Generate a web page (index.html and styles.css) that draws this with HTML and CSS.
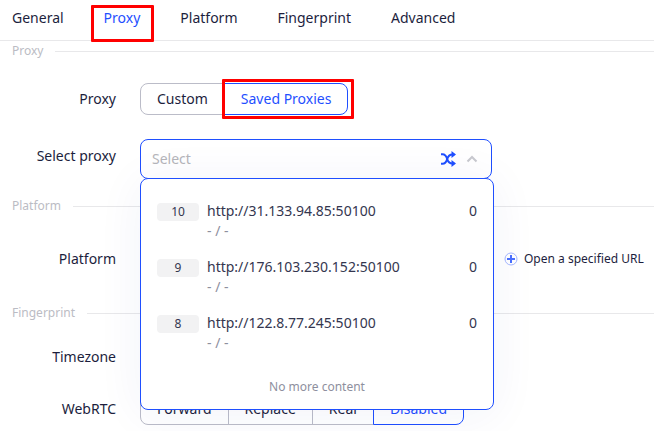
FILE: index.html
```html
<!DOCTYPE html>
<html lang="en">
<head>
  <meta charset="UTF-8">
  <meta name="viewport" content="width=device-width, initial-scale=1.0">
  <title>Proxy</title>
  <link rel="stylesheet" href="styles.css">
</head>
<body>
  <nav class="tabs">
    <a href="#general">General</a>
    <a href="#proxy" class="active marked">Proxy</a>
    <a href="#platform">Platform</a>
    <a href="#fingerprint">Fingerprint</a>
    <a href="#advanced">Advanced</a>
  </nav>

  <form>
    <section class="group" id="proxy">
      <h2 class="divider">Proxy</h2>
      <div class="rows">
        <div class="row">
          <span class="label" id="proxy-label">Proxy</span>
          <div class="segmented" role="group" aria-labelledby="proxy-label">
            <button type="button">Custom</button>
            <button type="button" class="active marked">Saved Proxies</button>
          </div>
        </div>
        <div class="row row-top">
          <label class="label" for="select-proxy">Select proxy</label>
          <div class="select">
            <div class="select-box">
              <input type="text" id="select-proxy" placeholder="Select" role="combobox" aria-expanded="true" aria-controls="proxy-menu" autocomplete="off">
              <button type="button" class="icon-button" aria-label="Random proxy">
                <svg width="16" height="16" viewBox="0 0 16 16" fill="none" stroke="#1f4fff" stroke-width="2">
                  <path d="M1 3.2h1.5c2.500 0 3.700 1.400 4.700 4.800s2.300 4.500 5.300 4.500"/>
                  <path d="M1 12.800h1.500c2.500 0 3.700-1.400 4.700-4.800s2.300-4.500 5.300-4.500"/>
                  <path d="M11.500 0l4.500 3.500-4.500 3.500zM11.500 9l4.500 3.500-4.500 3.500z" fill="#1f4fff" stroke="none"/>
                </svg>
              </button>
              <button type="button" class="icon-button" aria-label="Close list">
                <svg width="12" height="12" viewBox="0 0 12 12" fill="none" stroke="#c8c9ce" stroke-width="2">
                  <path d="M1.500 8.500L6 4l4.500 4.500"/>
                </svg>
              </button>
            </div>
            <div class="menu">
              <ul class="menu-list" id="proxy-menu" role="listbox">
                <li class="menu-item" role="option">
                  <span class="badge">10</span>
                  <div class="address">http://31.133.94.85:50100<small>- / -</small></div>
                  <span>0</span>
                </li>
                <li class="menu-item" role="option">
                  <span class="badge">9</span>
                  <div class="address">http://176.103.230.152:50100<small>- / -</small></div>
                  <span>0</span>
                </li>
                <li class="menu-item" role="option">
                  <span class="badge">8</span>
                  <div class="address">http://122.8.77.245:50100<small>- / -</small></div>
                  <span>0</span>
                </li>
              </ul>
              <p class="menu-end">No more content</p>
            </div>
          </div>
        </div>
      </div>
    </section>

    <section class="group" id="platform">
      <h2 class="divider">Platform</h2>
      <div class="rows">
        <div class="row row-tall">
          <span class="label">Platform</span>
          <a href="#url" class="open-url">
            <svg width="14" height="14" viewBox="0 0 14 14" fill="none" stroke="#1f4fff">
              <circle cx="7" cy="7" r="6" stroke="#a5b8ff"/>
              <path d="M3 7h8M7 3v8" stroke="#4a70ff" stroke-width="2"/>
            </svg>
            Open a specified URL
          </a>
        </div>
      </div>
    </section>

    <section class="group" id="fingerprint">
      <h2 class="divider">Fingerprint</h2>
      <div class="rows">
        <div class="row">
          <span class="label">Timezone</span>
        </div>
        <div class="row">
          <span class="label" id="webrtc-label">WebRTC</span>
          <div class="segmented" role="group" aria-labelledby="webrtc-label">
            <button type="button">Forward</button>
            <button type="button">Replace</button>
            <button type="button">Real</button>
            <button type="button" class="active">Disabled</button>
          </div>
        </div>
      </div>
    </section>
  </form>
</body>
</html>
```

FILE: styles.css
```css
* {
  box-sizing: border-box;
}
body {
  margin: 0;
  background: #fff;
  color: #1c1e3d;
  font-family: "Noto Sans", "Open Sans", sans-serif;
  font-size: 14px;
  line-height: 24px;
}
a {
  color: inherit;
  text-decoration: none;
}
button, input {
  font: inherit;
  color: inherit;
}

/* tabs */
.tabs {
  display: flex;
  gap: 40px;
  padding: 6px 12px 10px;
  border-bottom: 1px solid #e8e8ea;
}
.tabs .active {
  color: #1f4fff;
}

/* red highlight frames */
.marked {
  position: relative;
}
.marked::after {
  content: "";
  position: absolute;
  border: 3px solid #f00;
  border-radius: 1px;
}
.tabs .marked::after {
  inset: -1px -14px -12px -13px;
}
.segmented .marked::after {
  inset: -5px -7px -5px -3px;
}

/* groups */
.divider {
  display: flex;
  align-items: center;
  gap: 12px;
  margin: 0;
  padding-left: 12px;
  color: #bbbcc4;
  font-size: 12px;
  font-weight: 400;
  line-height: 20px;
}
.divider::after {
  content: "";
  flex: 1;
  height: 1px;
  background: #e8e8ea;
}
.rows {
  display: flex;
  flex-direction: column;
  gap: 24px;
  padding: 22px 0 17px;
}
#platform .rows {
  padding-bottom: 23px;
}
.row {
  display: grid;
  grid-template-columns: 116px 352px auto;
  column-gap: 24px;
  align-items: center;
}
.row-top {
  align-items: start;
}
.row-top .label {
  line-height: 34px;
}
.row-tall {
  min-height: 42px;
  column-gap: 18px;
}
.label {
  text-align: right;
}

/* button groups */
.segmented {
  display: flex;
}
.segmented button {
  height: 32px;
  padding: 0 16px;
  border: 1px solid #bbbcc8;
  background: #fff;
}
.segmented button + button {
  margin-left: -1px;
}
.segmented button:first-child {
  border-radius: 8px 0 0 8px;
}
.segmented button:last-child {
  border-radius: 0 8px 8px 0;
}
.segmented .active {
  border-color: #1f4fff;
  color: #1f4fff;
}

/* proxy select */
.select {
  position: relative;
}
.select-box {
  display: flex;
  align-items: center;
  gap: 10px;
  height: 40px;
  padding: 0 13px 0 11px;
  border: 1px solid #1f4fff;
  border-radius: 8px;
  background: #fff;
}
.select-box input {
  flex: 1;
  min-width: 0;
  padding: 0;
  border: 0;
  outline: 0;
  background: none;
}
.select-box input::placeholder {
  color: #b5b5ba;
}
.icon-button {
  display: flex;
  padding: 0;
  border: 0;
  background: none;
}
.menu {
  position: absolute;
  z-index: 1;
  top: 39px;
  left: 0;
  width: 354px;
  padding: 14px 16px 12px;
  border: 1px solid #1f4fff;
  border-radius: 8px;
  background: #fff;
  box-shadow: 0 4px 48px rgba(31, 50, 150, 0.06);
  color: #34364f;
}
.menu-list {
  margin: 0;
  padding: 0;
  list-style: none;
}
.menu-item {
  display: flex;
  align-items: flex-start;
  gap: 8px;
  padding: 8px 0;
  line-height: 20px;
}
.badge {
  width: 42px;
  margin-top: 2px;
  border-radius: 4px;
  background: #f2f2f3;
  font-size: 12px;
  line-height: 18px;
  text-align: center;
}
.address {
  flex: 1;
}
.address small {
  display: block;
  color: #8e8f9e;
  font-size: 14px;
}
.menu-end {
  margin: 0;
  padding-top: 16px;
  color: #8e8f9e;
  font-size: 12px;
  line-height: 20px;
  text-align: center;
}

.open-url {
  grid-column: 3;
  display: flex;
  align-items: center;
  gap: 6px;
  font-size: 12px;
  white-space: nowrap;
}
```
